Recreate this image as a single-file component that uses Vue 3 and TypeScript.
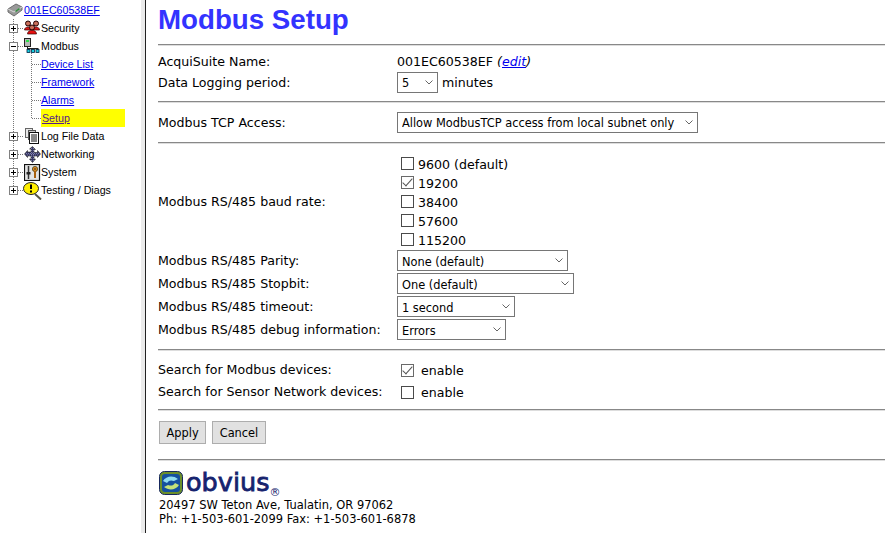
<script setup lang="ts">
import { ref } from 'vue'

const bauds = ref([
  { label: '9600 (default)', on: false },
  { label: '19200', on: true },
  { label: '38400', on: false },
  { label: '57600', on: false },
  { label: '115200', on: false },
])
</script>

<template>
  <div class="page">
    <nav class="side">
      <div class="root">
        <svg class="root-icon" width="16" height="14" viewBox="0 0 16 14">
          <path d="M1 6 9 1l6 3v3l-8 6-6-4z" fill="#9a9a9a" stroke="#6d6d6d" />
          <path d="M1 6l6 3 8-5" fill="none" stroke="#d8d8d8" />
          <path d="M8 8l4-3 1 1-4 3z" fill="#2f8f3a" />
        </svg>
        <a href="#">001EC60538EF</a>
      </div>
      <div class="tree">
        <div class="row">
          <span class="toggle plus"></span><span class="stub"></span>
          <svg class="icon" viewBox="0 0 17 17">
            <circle cx="4" cy="3.500" r="2.500" fill="#c9705a" stroke="#200" />
            <circle cx="12" cy="3.500" r="2.500" fill="#c9705a" stroke="#200" />
            <path d="M.5 10c0-4 7-4 7 0zM8.500 10c0-4 7-4 7 0z" fill="#d81818" stroke="#300" stroke-width=".7" />
            <circle cx="8" cy="7.500" r="2.500" fill="#c9705a" stroke="#200" />
            <path d="M3.500 14c0-5 9-5 9 0z" fill="#e81010" stroke="#300" stroke-width=".7" />
          </svg>
          <span class="label">Security</span>
        </div>
        <div class="row">
          <span class="toggle"></span><span class="stub"></span>
          <svg class="icon" viewBox="0 0 17 17">
            <rect x=".5" y=".5" width="6" height="8" fill="#b8b8b8" stroke="#222" />
            <rect x="2" y="2" width="3" height="2" fill="#2fe04a" />
            <path d="M3.500 8.500v2.500M3.500 10.500h11M4.500 11v1M9 11v1M13.500 11v1" stroke="#222" fill="none" />
            <rect x="3" y="11.500" width="3" height="3" fill="#19d0e0" stroke="#024" stroke-width=".8" />
            <rect x="7.500" y="11.500" width="3" height="3" fill="#19d0e0" stroke="#024" stroke-width=".8" />
            <rect x="12" y="11.500" width="3" height="3" fill="#19d0e0" stroke="#024" stroke-width=".8" />
          </svg>
          <span class="label">Modbus</span>
        </div>
        <div class="sub">
          <div class="row sub-row"><span class="sub-stub"></span><a href="#">Device List</a></div>
          <div class="row sub-row"><span class="sub-stub"></span><a href="#">Framework</a></div>
          <div class="row sub-row"><span class="sub-stub"></span><a href="#">Alarms</a></div>
          <div class="row sub-row"><span class="sub-stub"></span><a href="#" class="current">Setup</a></div>
        </div>
        <div class="row">
          <span class="toggle plus"></span><span class="stub"></span>
          <svg class="icon" viewBox="0 0 17 17">
            <rect x="1.500" y=".5" width="7" height="9" fill="#e8e8e8" stroke="#666" />
            <rect x="4.500" y="2.500" width="7" height="9" fill="#ccc" stroke="#555" />
            <rect x="5.500" y="4.500" width="9" height="11" fill="#fff" stroke="#111" />
            <path d="M7 7h6M7 9h6M7 11h6M7 13h6" stroke="#111" />
          </svg>
          <span class="label">Log File Data</span>
        </div>
        <div class="row">
          <span class="toggle plus"></span><span class="stub"></span>
          <svg class="icon" viewBox="0 0 17 17">
            <path d="M8.500 .5l3 3H10v3h3.500V4.500L16.500 8l-3 3.500V10H10v3h1.500l-3 3.500-3-3.500H7v-3H3.500v1.500L.5 8l3-3.500V6H7V3H5.500z" fill="#3b3b66" stroke="#111" stroke-width=".5" />
            <path d="M2 7.500h13M3 9h11M7.500 2v13M9.500 2v13" stroke="#a9a9d8" stroke-width=".6" stroke-dasharray="1 1" />
          </svg>
          <span class="label">Networking</span>
        </div>
        <div class="row">
          <span class="toggle plus"></span><span class="stub"></span>
          <svg class="icon" viewBox="0 0 17 17">
            <rect x=".5" y=".5" width="15" height="16" fill="#e4e4e4" stroke="#111" stroke-width="1.200" />
            <path d="M4.500 2v13" stroke="#333" stroke-width="1.500" />
            <rect x="2.500" y="8" width="4" height="2.500" fill="#222" />
            <circle cx="11" cy="5" r="2.600" fill="#e08a1e" stroke="#442" stroke-width=".8" />
            <path d="M11 7v7" stroke="#a8600e" stroke-width="2" />
            <circle cx="11" cy="5" r=".8" fill="#222" />
          </svg>
          <span class="label">System</span>
        </div>
        <div class="row">
          <span class="toggle plus"></span><span class="stub"></span>
          <svg class="icon wide" viewBox="0 0 19 19">
            <ellipse cx="8" cy="7.500" rx="7.500" ry="6" fill="#ffee00" stroke="#222" />
            <path d="M8 3.500v4.500" stroke="#000" stroke-width="2" />
            <rect x="7" y="9.500" width="2" height="2" fill="#000" />
            <path d="M12 13l6 5.500" stroke="#554" stroke-width="2" />
          </svg>
          <span class="label">Testing / Diags</span>
        </div>
      </div>
    </nav>

    <main class="content">
      <h1>Modbus Setup</h1>
      <hr />
      <div class="line name"><span>AcquiSuite Name:</span><span>001EC60538EF <i>(<a href="#">edit</a>)</i></span></div>
      <div class="line">
        <span>Data Logging period:</span>
        <span><select class="s-period"><option>5</option></select> minutes</span>
      </div>
      <hr />
      <div class="line tcp">
        <span>Modbus TCP Access:</span>
        <select class="s-tcp"><option>Allow ModbusTCP access from local subnet only</option></select>
      </div>
      <hr />
      <div class="line baud">
        <span>Modbus RS/485 baud rate:</span>
        <div class="checks">
          <label v-for="b in bauds" :key="b.label" class="check">
            <input v-model="b.on" type="checkbox" />{{ b.label }}
          </label>
        </div>
      </div>
      <div class="line"><span>Modbus RS/485 Parity:</span><select class="s-parity low"><option>None (default)</option></select></div>
      <div class="line"><span>Modbus RS/485 Stopbit:</span><select class="s-stop low"><option>One (default)</option></select></div>
      <div class="line"><span>Modbus RS/485 timeout:</span><select class="s-time low"><option>1 second</option></select></div>
      <div class="line debug"><span>Modbus RS/485 debug information:</span><select class="s-debug low"><option>Errors</option></select></div>
      <hr />
      <div class="line search first">
        <span>Search for Modbus devices:</span>
        <label class="check enable"><input type="checkbox" checked />enable</label>
      </div>
      <div class="line search">
        <span>Search for Sensor Network devices:</span>
        <label class="check enable"><input type="checkbox" />enable</label>
      </div>
      <hr />
      <div class="buttons">
        <button type="button">Apply</button>
        <button type="button">Cancel</button>
      </div>
      <hr />
      <footer>
        <div class="logo">
          <svg width="24" height="24" viewBox="0 0 24 24">
            <rect x=".5" y=".5" width="23" height="23" rx="5" fill="#6b8f2a" stroke="#16275e" />
            <rect x="3" y="3" width="18" height="18" rx="3" fill="#14509f" />
            <path d="M4 10c3-5 10-6 15-2l-4 2c-3-1-5-1-7 2z" fill="#8fdcf0" />
            <path d="M20 14c-3 5-10 6-15 2l4-2c3 1 5 1 7-2z" fill="#c4e27a" />
          </svg>
          <span class="word">obvius</span><span class="reg">®</span>
        </div>
        <div>20497 SW Teton Ave, Tualatin, OR 97062</div>
        <div>Ph: +1-503-601-2099 Fax: +1-503-601-6878</div>
      </footer>
    </main>
  </div>
</template>

<style>
body {
  background: #fff;
  overflow: hidden;
}
</style>

<style scoped>
.page {
  display: flex;
  height: 533px;
  color: #000;
  font-family: "DejaVu Sans", Verdana, sans-serif;
  font-size: 12.6px;
}

/* left tree */
.side {
  width: 141px;
  flex: none;
  border-right: 4px solid #ebebeb;
  box-shadow: 1px 0 0 #222;
  font: 10.67px "Liberation Sans", Arial, sans-serif;
}

.side a {
  color: #00e;
}

.root {
  display: flex;
  align-items: center;
  height: 19px;
  padding-left: 7px;
  gap: 1px;
}

.tree {
  position: relative;
}

/* dotted tree lines */
.tree::before {
  content: "";
  position: absolute;
  left: 13px;
  top: 0;
  height: 171px;
  border-left: 1px dotted #777;
}

.row {
  display: flex;
  align-items: center;
  height: 18px;
  position: relative;
}

.toggle {
  width: 9px;
  height: 9px;
  margin-left: 9px;
  border: 1px solid #808080;
  background: linear-gradient(#000, #000) center / 5px 1px no-repeat #fff;
  box-sizing: border-box;
}

.toggle.plus {
  background:
    linear-gradient(#000, #000) center / 5px 1px no-repeat,
    linear-gradient(#000, #000) center / 1px 5px no-repeat,
    #fff;
}

.stub {
  width: 5px;
  border-top: 1px dotted #777;
  margin-right: 1px;
}

.icon {
  width: 17px;
  height: 17px;
  flex: none;
}

.icon.wide {
  width: 19px;
  height: 19px;
  margin: 0 -1px;
}

.sub {
  position: relative;
}

.sub::before {
  content: "";
  position: absolute;
  left: 31px;
  top: -2px;
  height: 65px;
  border-left: 1px dotted #777;
}

.sub-row {
  padding-left: 32px;
}

.sub-stub {
  width: 9px;
  border-top: 1px dotted #777;
}

.sub-row a {
  display: block;
  line-height: 18px;
}

.sub-row a.current {
  width: 83px;
  padding-left: 1px;
  background: #ffff00;
  color: #551a8b;
}

/* right content */
.content {
  flex: 1;
  min-width: 0;
  padding-left: 13px;
}

h1 {
  margin: 0;
  height: 37px;
  font: bold 27.7px/40px "Liberation Sans", Arial, sans-serif;
  color: #3333ff;
}

hr {
  margin: 7px 0 4px;
  border: 0;
  border-top: 1px solid #888;
  border-bottom: 1px solid #ddd;
  height: 0;
}

.line {
  display: grid;
  grid-template-columns: 239px 1fr;
  align-items: center;
  justify-items: start;
  min-height: 23px;
}

.name {
  min-height: 20px;
  padding-top: 1px;
}

.tcp {
  padding: 4px 0 1px;
}

.baud {
  padding: 6px 0 0;
}

.debug {
  padding-bottom: 1px;
}

.search {
  min-height: 22px;
}

.search.first {
  padding-top: 3px;
}

select {
  appearance: none;
  height: 21px;
  padding: 0 0 0 4px;
  font: 11.4px "DejaVu Sans", Verdana, sans-serif;
  color: #000;
  border: 1px solid #767676;
  border-radius: 0;
  background: #fff url("data:image/svg+xml,%3Csvg xmlns='http://www.w3.org/2000/svg' width='8' height='5'%3E%3Cpath d='M.5.5l3.500 3.500 3.500-3.500' fill='none' stroke='%23666'/%3E%3C/svg%3E") no-repeat right 4px center;
}

select.low {
  padding-top: 2px;
}

.s-period { width: 41px; }
.s-tcp { width: 301px; }
.s-parity { width: 171px; }
.s-stop { width: 177px; }
.s-time { width: 118px; }
.s-debug { width: 109px; }

i a {
  color: #00e;
}

.checks {
  display: flex;
  flex-direction: column;
}

.check {
  display: flex;
  align-items: center;
  height: 19px;
  padding-left: 4px;
}

.checks .check {
  padding-top: 2px;
  box-sizing: border-box;
}

.checks .check input {
  margin-top: -2px;
}

.check input {
  appearance: none;
  width: 13px;
  height: 13px;
  margin: 0 4px 0 0;
  border: 1px solid #4a4a4a;
  background: #fff;
  position: relative;
}

.check input:checked {
  border-color: #6a6a6a;
}

.check input:checked::after {
  content: "";
  position: absolute;
  left: 3px;
  top: -1px;
  width: 4px;
  height: 9px;
  border: solid #555;
  border-width: 0 1px 1px 0;
  transform: rotate(42deg);
}

.enable {
  padding-top: 3px;
}

.enable input {
  margin-right: 7px;
}

.buttons {
  display: flex;
  gap: 6px;
  padding: 6px 0 8px 1px;
}

button {
  height: 23px;
  padding: 1px 6.5px 0;
  font: 11.4px "DejaVu Sans", Verdana, sans-serif;
  background: #e1e1e1;
  border: 1px solid #adadad;
  color: #000;
}

footer {
  padding: 6px 0 0 1px;
  font-size: 11.47px;
  line-height: 14px;
}

.logo {
  display: flex;
  align-items: flex-start;
  height: 27px;
}

.word {
  font: 25.5px/23px "DejaVu Sans", Verdana, sans-serif;
  -webkit-text-stroke: 0.8px #16236e;
  color: #16236e;
  margin-left: 3px;
}

.reg {
  font-size: 11px;
  line-height: 11px;
  color: #16236e;
  margin-top: 16px;
}
</style>
